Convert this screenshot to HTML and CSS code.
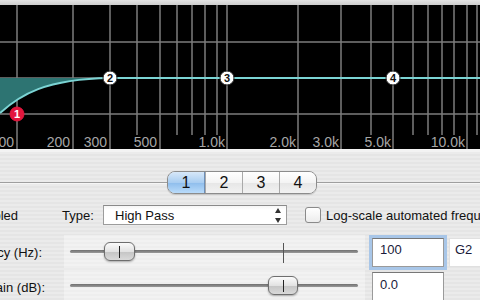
FILE: index.html
```html
<!DOCTYPE html>
<html lang="en">
<head>
  <meta charset="UTF-8">
  <title>Channel EQ</title>
  <link rel="stylesheet" href="styles.css">
</head>

<body>
  <div class="topbar"></div>

  <div class="graph">
    <svg width="480" height="144" viewBox="0 0 480 144">
      <g class="grid">
        <line x1="0" y1="37" x2="480" y2="37" />
        <line x1="0" y1="109" x2="480" y2="109" />
        <line x1="17" y1="0" x2="17" y2="144" />
        <line x1="73" y1="0" x2="73" y2="144" />
        <line x1="110" y1="0" x2="110" y2="144" />
        <line x1="137" y1="0" x2="137" y2="130" />
        <line x1="160" y1="0" x2="160" y2="144" />
        <line x1="177" y1="0" x2="177" y2="130" />
        <line x1="192" y1="0" x2="192" y2="130" />
        <line x1="205" y1="0" x2="205" y2="130" />
        <line x1="217" y1="0" x2="217" y2="130" />
        <line x1="227" y1="0" x2="227" y2="144" />
        <line x1="298" y1="0" x2="298" y2="144" />
        <line x1="341" y1="0" x2="341" y2="144" />
        <line x1="371" y1="0" x2="371" y2="130" />
        <line x1="393" y1="0" x2="393" y2="144" />
        <line x1="413" y1="0" x2="413" y2="130" />
        <line x1="428" y1="0" x2="428" y2="130" />
        <line x1="442" y1="0" x2="442" y2="130" />
        <line x1="454" y1="0" x2="454" y2="130" />
        <line x1="467" y1="0" x2="467" y2="144" />
        <line x1="477" y1="0" x2="477" y2="130" />
        <line x1="0" y1="73" x2="480" y2="73" />
      </g>

      <!-- band 1 cut area, then the response curve -->
      <path class="cut" d="M0,73 L0,108 C20,90 45,74 110,73 Z" />
      <path class="curve" d="M0,108 C20,90 45,74 110,73 L480,73" />

      <g class="labels">
        <text x="14" y="142">100</text>
        <text x="70" y="142">200</text>
        <text x="107" y="142">300</text>
        <text x="157" y="142">500</text>
        <text x="225" y="142">1.0k</text>
        <text x="296" y="142">2.0k</text>
        <text x="339" y="142">3.0k</text>
        <text x="391" y="142">5.0k</text>
        <text x="465" y="142">10.0k</text>
      </g>

      <g class="node node-on">
        <circle cx="17" cy="109" r="7" />
        <text x="17" y="113">1</text>
      </g>
      <g class="node">
        <circle cx="110" cy="73" r="7" />
        <text x="110" y="77">2</text>
      </g>
      <g class="node">
        <circle cx="227" cy="73" r="7" />
        <text x="227" y="77">3</text>
      </g>
      <g class="node">
        <circle cx="393" cy="73" r="7" />
        <text x="393" y="77">4</text>
      </g>
    </svg>
  </div>

  <div class="panel">
    <div class="tabs">
      <span class="rule rule-left"></span>
      <div class="segments">
        <button class="seg active">1</button>
        <button class="seg">2</button>
        <button class="seg">3</button>
        <button class="seg">4</button>
      </div>
      <span class="rule"></span>
    </div>

    <div class="row row-type">
      <span class="lbl lbl-enabled">Enabled</span>
      <span class="lbl-type">Type:</span>
      <div class="popup">
        <span>High Pass</span>
        <svg class="arrows" width="6" height="15" viewBox="0 0 6 15">
          <path d="M3,0 L6,5 L0,5 Z" />
          <path d="M0,10 L6,10 L3,15 Z" />
        </svg>
      </div>
      <span class="check"></span>
      <span class="check-text">Log-scale automated frequency</span>
    </div>

    <div class="row row-freq">
      <span class="lbl lbl-freq">Frequency (Hz):</span>
      <div class="slider">
        <div class="track">
          <span class="tick" style="left: 213px"></span>
          <span class="thumb" style="left: 34px"></span>
        </div>
      </div>
      <div class="field focus">100</div>
      <div class="field note">G2</div>
    </div>

    <div class="row row-gain">
      <span class="lbl lbl-gain">Gain (dB):</span>
      <div class="slider">
        <div class="track">
          <span class="thumb" style="left: 198px"></span>
        </div>
      </div>
      <div class="field">0.0</div>
    </div>
  </div>
</body>
</html>
```

FILE: styles.css
```css
body {
  font-family: "Liberation Sans", Arial, sans-serif;
  font-size: 13px;
  color: #111;
  margin: 0;
  padding: 0;
  width: 480px;
  height: 300px;
  overflow: hidden;
  background: repeating-linear-gradient(to bottom, #ebebeb 0 2px, #e5e5e5 2px 4px);
}
.topbar {
  height: 5px;
  background: linear-gradient(#e4e4e4, #cdcdcd);
}
.graph {
  height: 144px;
  background: #000;
}
.graph svg {
  display: block;
}
.grid line {
  stroke: #7c7c7c;
  stroke-width: 1.5;
}
.cut {
  fill: #2d7472;
}
.curve {
  fill: none;
  stroke: #7bd4d4;
  stroke-width: 2;
}
.labels text {
  font-family: "Liberation Sans", Arial, sans-serif;
  font-size: 14px;
  fill: #a6a6a6;
  text-anchor: end;
}
.node circle {
  fill: #fff;
  stroke: #222;
  stroke-width: 1;
}
.node text {
  font-family: "Liberation Sans", Arial, sans-serif;
  font-size: 11px;
  font-weight: bold;
  fill: #111;
  text-anchor: middle;
}
.node-on circle {
  fill: #e3163d;
  stroke: #e3163d;
}
.node-on text {
  fill: #fff;
}
.panel {
  border-top: 3px solid #f3f3f3;
  padding-top: 19px;
}
.tabs {
  display: flex;
  align-items: center;
  height: 23px;
}
.rule {
  flex: 1;
  height: 1px;
  background: #9f9f9f;
  border-bottom: 1px solid #f6f6f6;
}
.rule-left {
  flex: 0 0 167px;
}
.segments {
  display: flex;
  width: 150px;
  height: 23px;
  box-sizing: border-box;
  border: 1px solid #8c8c8c;
  border-radius: 8px;
  overflow: hidden;
  box-shadow: 0 1px 1px rgba(0, 0, 0, 0.15);
  flex: none;
}
.seg {
  flex: 1;
  border: none;
  border-left: 1px solid #a9a9a9;
  padding: 0;
  font-family: "Liberation Sans", Arial, sans-serif;
  font-size: 16px;
  color: #111;
  background: linear-gradient(#ffffff, #f4f4f4 50%, #e6e6e6 51%, #f2f2f2);
}
.seg:first-child {
  border-left: none;
}
.seg.active {
  background: linear-gradient(#d7e8f9, #a9cdf1 50%, #8ebdec 51%, #b9dbfa);
  border-right: 1px solid #6d8fb8;
}
.row {
  display: flex;
  align-items: center;
}
.row > * {
  flex: none;
}
.lbl {
  display: flex;
  justify-content: flex-end;
  white-space: nowrap;
}
.row-type {
  margin-top: 11px;
  height: 20px;
}
.lbl-enabled {
  width: 18px;
}
.lbl-type {
  margin-left: 44px;
  width: 30px;
}
.popup {
  margin-left: 11px;
  width: 184px;
  height: 20px;
  box-sizing: border-box;
  border: 1px solid #9c9c9c;
  border-top-color: #8a8a8a;
  background: linear-gradient(#f6f6f6, #fff 4px);
  display: flex;
  align-items: center;
  justify-content: space-between;
  padding: 0 5px 0 11px;
}
.arrows path {
  fill: #333;
}
.check {
  margin-left: 18px;
  width: 16px;
  height: 16px;
  box-sizing: border-box;
  border: 1px solid #8a8a8a;
  border-radius: 3px;
  background: linear-gradient(#ffffff, #ececec);
}
.check-text {
  margin-left: 5px;
  white-space: nowrap;
}
.row-freq {
  margin-top: 10px;
  height: 33px;
}
.row-gain {
  margin-top: 2px;
  height: 30px;
  align-items: flex-start;
}
.lbl-freq {
  width: 42px;
  margin-top: 1px;
}
.lbl-gain {
  width: 45px;
  margin-top: 10px;
}
.slider {
  margin-left: 22px;
  width: 301px;
  height: 33px;
  background: rgba(255, 255, 255, 0.35);
  display: flex;
  align-items: center;
  padding: 0 7px 0 6px;
  box-sizing: border-box;
}
.row-gain .slider {
  margin-left: 19px;
  height: 30px;
}
.track {
  position: relative;
  flex: 1;
  height: 3px;
  border-radius: 2px;
  background: linear-gradient(#6f6f6f, #9a9a9a);
}
.tick {
  position: absolute;
  top: -7px;
  width: 1px;
  height: 20px;
  background: #555;
}
.thumb {
  position: absolute;
  top: -8px;
  width: 31px;
  height: 19px;
  box-sizing: border-box;
  border: 1px solid #6e6e6e;
  border-radius: 6px;
  background: linear-gradient(#fbfbfb, #e2e2e2 50%, #c4c4c4 51%, #d9d9d9);
  box-shadow: 0 1px 2px rgba(0, 0, 0, 0.3);
}
.thumb::after {
  content: "";
  position: absolute;
  left: 14px;
  top: 3px;
  width: 1px;
  height: 12px;
  background: #222;
}
.row-gain .thumb {
  width: 30px;
}
.field {
  margin-left: 7px;
  width: 72px;
  height: 29px;
  box-sizing: border-box;
  border: 1px solid #9a9a9a;
  border-top-color: #777;
  background: #fff;
  padding: 3px 7px;
  line-height: 16px;
  color: #1a1a3a;
  align-self: flex-start;
  margin-top: 3px;
}
.row-gain .field {
  margin-top: 2px;
  padding-top: 4px;
}
.field.focus {
  box-shadow: 0 0 0 3px #a8c6e8;
}
.field.note {
  margin-left: 5px;
  width: 60px;
  border-color: #e0e0e0;
  padding-left: 5px;
}
```
